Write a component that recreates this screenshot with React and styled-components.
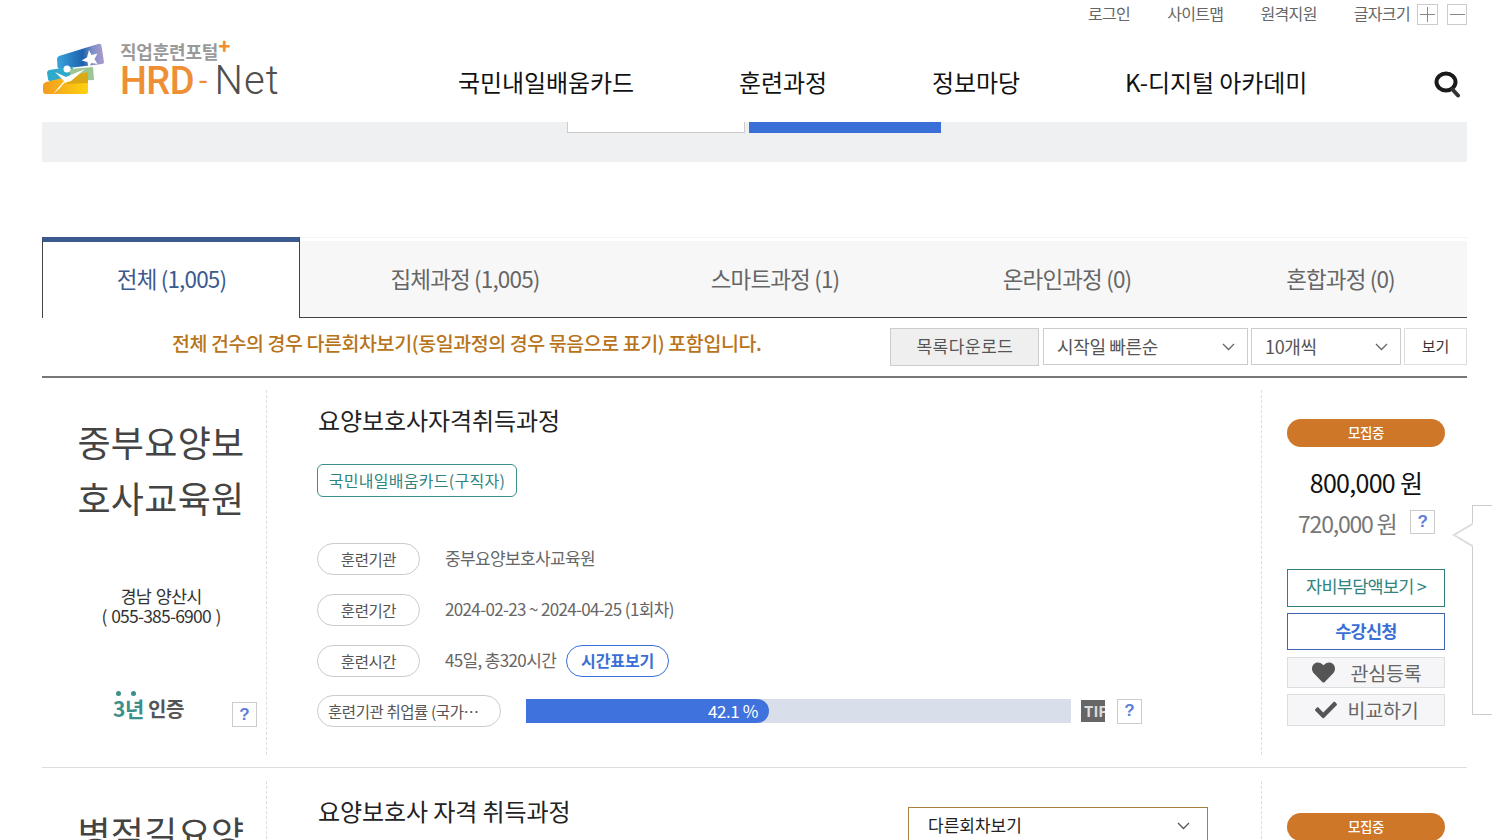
import React from "react";
import styled, { createGlobalStyle } from "styled-components";
import { FaHeart, FaCheck } from "react-icons/fa";

const GlobalStyle = createGlobalStyle`
  html, body {
    margin: 0;
    padding: 0;
    height: 840px;
    overflow: hidden;
    background: #fff;
  }
  * { box-sizing: border-box; }
  body {
    font-family: "Noto Sans CJK KR", "Noto Sans", sans-serif;
    color: #333;
  }
`;

const Page = styled.div`
  width: 1492px;
  padding: 0 25px 0 42px;
`;

const UtilBar = styled.div`
  display: flex;
  justify-content: flex-end;
  align-items: center;
  height: 28px;
  font-size: 16px;
  letter-spacing: -0.65px;
  color: #666;
`;

const UtilLink = styled.span`
  margin-right: 37px;
  padding-bottom: 2px;
  &:nth-child(4) { margin-right: 7px; }
`;

const SizeButton = styled.span`
  display: flex;
  align-items: center;
  justify-content: center;
  width: ${(p) => p.$w}px;
  height: 21px;
  margin-left: ${(p) => p.$gap}px;
  border: 1px solid #ccc;
  background: #fff;
  svg { display: block; }
`;

const Header = styled.div`
  display: flex;
  align-items: center;
  height: 94px;
  padding: 13px 7px 0 0;
`;

const Logo = styled.div`
  display: flex;
  align-self: flex-start;
  gap: 14px;
  width: 416px;
  margin-top: 1px;
`;

const LogoText = styled.div`
  display: flex;
  flex-direction: column;
`;

const LogoSmall = styled.div`
  height: 20px;
  font-size: 18px;
  line-height: 20px;
  font-weight: 700;
  letter-spacing: -0.2px;
  color: #9a9a9a;
  white-space: nowrap;
  margin-top: -1px;
  b { color: #ef8f2f; font-size: 20px; line-height: 10px; vertical-align: 5px; }
`;

const LogoBig = styled.div`
  font-family: Roboto, "Liberation Sans", sans-serif;
  font-size: 38px;
  line-height: 36px;
  margin-top: 2px;
  white-space: nowrap;
  color: #ef8f35;
  font-weight: 500;
  letter-spacing: -0.6px;
  span { margin: 0 8px 0 5px; font-size: 30px; font-weight: 400; vertical-align: 3px; }
  em { font-style: normal; font-size: 40px; font-weight: 300; color: #4f4f4f; letter-spacing: 1px; }
`;

const Nav = styled.nav`
  display: flex;
  gap: 105px;
  font-size: 24px;
  letter-spacing: -0.08px;
  color: #111;
  white-space: nowrap;
`;

const SearchIcon = styled.svg`
  display: block;
  margin: 4px 0 0 auto;
  width: 26px;
  height: 28px;
`;

const SearchStrip = styled.div`
  display: flex;
  align-items: flex-start;
  gap: 4px;
  height: 40px;
  padding-left: 525px;
  background: #eff0f2;
`;

const StripInput = styled.div`
  width: 178px;
  height: 11px;
  background: #fff;
  border: 1px solid #ccc;
  border-top: 0;
`;

const StripButton = styled.div`
  width: 192px;
  height: 11px;
  background: #3a6fd8;
`;

const Tabs = styled.div`
  display: grid;
  grid-template-columns: 258px 332px 288px 296px 251px;
  height: 81px;
  margin-top: 75px;
`;

const Tab = styled.div`
  display: flex;
  align-items: center;
  justify-content: center;
  font-size: 22.5px;
  letter-spacing: -0.85px;
  padding: 0 ${(p) => (p.$active ? "0" : "2px")} ${(p) => (p.$active ? "4px" : "2px")} ${(p) => (p.$active ? "1px" : "0")};
  color: ${(p) => (p.$active ? "#3b5a8f" : "#666")};
  background: ${(p) => (p.$active ? "#fff" : "#f7f7f7")};
  margin-top: ${(p) => (p.$active ? "0" : "4px")};
  box-shadow: ${(p) => (p.$active ? "none" : "0 -3px 0 #fff, 0 -4px 0 #f3f3f3")};
  border-top: ${(p) => (p.$active ? "5px solid #3b5a8f" : "0")};
  border-left: ${(p) => (p.$active ? "1px solid #444" : "0")};
  border-right: ${(p) => (p.$active ? "1px solid #444" : "0")};
  border-bottom: ${(p) => (p.$active ? "0" : "1px solid #444")};
`;

const FilterBar = styled.div`
  display: flex;
  align-items: flex-start;
  height: 60px;
  padding-top: 10px;
  border-bottom: 2px solid #777;
`;

const Notice = styled.div`
  width: 848px;
  padding-left: 130px;
  font-size: 19.5px;
  line-height: 30px;
  font-weight: 500;
  letter-spacing: -0.42px;
  color: #b8741a;
  white-space: nowrap;
`;

const DownloadButton = styled.div`
  display: flex;
  align-items: center;
  justify-content: center;
  width: 149px;
  height: 38px;
  margin-right: 4px;
  padding: 0 0 3px 1px;
  background: #efefef;
  border: 1px solid #ccc;
  font-size: 17px;
  letter-spacing: 0.55px;
  color: #555;
`;

const FakeSelect = styled.div`
  display: flex;
  align-items: center;
  justify-content: space-between;
  width: ${(p) => p.$w}px;
  height: 37px;
  margin-right: 3px;
  padding: 0 12px 2px 13px;
  background: #fff;
  border: 1px solid #ccc;
  font-size: 18px;
  letter-spacing: -0.35px;
  color: #555;
  svg { display: block; margin-top: 2px; }
`;

const ViewButton = styled.div`
  display: flex;
  align-items: center;
  justify-content: center;
  width: 63px;
  height: 37px;
  padding-bottom: 2px;
  border: 1px solid #ddd;
  font-size: 15px;
  color: #333;
`;

const Card = styled.article`
  display: grid;
  grid-template-columns: 225px 995px 205px;
  height: ${(p) => p.$h}px;
  padding: ${(p) => p.$pad}px 0 12px;
  border-bottom: 1px solid #ddd;
`;

const LeftCol = styled.div`
  display: flex;
  flex-direction: column;
  padding: 23px 0 0;
  border-right: 1px dashed #ddd;
`;

const InstituteName = styled.h2`
  margin: 0;
  padding: 0 13px 0 27px;
  height: 112px;
  flex: none;
  font-size: 36px;
  line-height: 56px;
  font-weight: 400;
  text-align: center;
  letter-spacing: 0.3px;
  color: #444;
`;

const Address = styled.div`
  margin-top: 61px;
  padding: 0 15px 0 29px;
  font-size: 17.5px;
  line-height: 20px;
  letter-spacing: -0.8px;
  word-spacing: 1.5px;
  text-align: center;
  color: #333;
`;

const CertRow = styled.div`
  display: flex;
  align-items: flex-start;
  justify-content: space-between;
  margin-top: 67px;
  padding: 0 9px 0 71px;
  & > span:last-child { margin-top: 9px; }
`;

const CertMark = styled.div`
  font-size: 20px;
  line-height: 30px;
  font-weight: 700;
  letter-spacing: -0.4px;
  color: #555;
`;

const CertYears = styled.span`
  position: relative;
  font-size: 21px;
  color: #3a8f8a;
  margin-right: 4px;
  &::before, &::after {
    content: "";
    position: absolute;
    top: -2px;
    width: 5px;
    height: 5px;
    border-radius: 50%;
    background: #3a8f8a;
  }
  &::before { left: 3px; }
  &::after { left: 18px; }
`;

const HelpBox = styled.span`
  display: flex;
  align-items: center;
  justify-content: center;
  width: 25px;
  height: 25px;
  flex: none;
  background: #fff;
  border: 1px solid #ccc;
  font-family: "Liberation Sans", sans-serif;
  font-size: 17px;
  font-weight: 700;
  color: #5f7fd6;
`;

const MidCol = styled.div`
  display: flex;
  flex-direction: column;
  padding: 12px 53px 0 50px;
  border-right: 1px dashed #ddd;
`;

const TitleRow = styled.div`
  display: flex;
  align-items: flex-start;
  justify-content: space-between;
`;

const Title = styled.h3`
  margin: 0 0 0 1px;
  font-size: 24px;
  line-height: 36px;
  font-weight: 400;
  letter-spacing: -0.08px;
  color: #222;
`;

const RoundSelect = styled.div`
  display: flex;
  align-items: center;
  justify-content: space-between;
  width: 300px;
  height: 38px;
  margin-top: 14px;
  padding: 0 17px 3px 19px;
  border: 1px solid #a8803c;
  font-size: 17px;
  color: #222;
  svg { display: block; margin-top: 3px; }
`;

const TrackTag = styled.div`
  align-self: flex-start;
  display: flex;
  align-items: center;
  height: 33px;
  width: 200px;
  justify-content: center;
  margin: 26px 0 46px;
  padding-bottom: 2px;
  border: 1px solid #3a8f8a;
  border-radius: 6px;
  font-size: 16px;
  letter-spacing: 0.28px;
  color: #2f8580;
`;

const InfoRow = styled.div`
  display: flex;
  align-items: center;
  height: 32px;
  margin-bottom: ${(p) => p.$mb}px;
`;

const InfoLabel = styled.span`
  display: block;
  flex: none;
  width: ${(p) => p.$w}px;
  height: 32px;
  margin-right: 25px;
  padding: 0 ${(p) => (p.$wide ? "14px 0 10px" : "0")};
  border: 1px solid #ccc;
  border-radius: 16px;
  font-size: 15.5px;
  line-height: 31px;
  letter-spacing: -0.42px;
  text-align: ${(p) => (p.$wide ? "left" : "center")};
  color: #555;
  white-space: nowrap;
  overflow: hidden;
  text-overflow: ellipsis;
`;

const InfoValue = styled.span`
  font-size: 17px;
  letter-spacing: -0.65px;
  padding-bottom: 3px;
  color: #666;
`;

const TimetableButton = styled.span`
  display: flex;
  align-items: center;
  justify-content: center;
  width: 103px;
  height: 32px;
  margin-left: 10px;
  padding-bottom: 2px;
  border: 1px solid #3a6fd8;
  border-radius: 16px;
  font-size: 16px;
  font-weight: 700;
  letter-spacing: -0.1px;
  color: #3a6fd8;
`;

const Progress = styled.div`
  width: 545px;
  height: 24px;
  background: #d8dfeb;
`;

const ProgressFill = styled.div`
  width: ${(p) => p.$w}px;
  height: 24px;
  padding-right: 11px;
  border-radius: 0 12px 12px 0;
  background: #3f72dc;
  font-size: 17px;
  line-height: 23px;
  letter-spacing: -0.4px;
  text-align: right;
  color: #fff;
`;

const TipBadge = styled.span`
  display: block;
  width: 24px;
  height: 22px;
  margin: 0 12px 0 10px;
  overflow: hidden;
  background: #666;
  font-size: 15px;
  line-height: 22px;
  font-weight: 700;
  padding-left: 3px;
  color: #ddd;
`;

const RightCol = styled.div`
  position: relative;
  display: flex;
  flex-direction: column;
  align-items: stretch;
  width: 183px;
  padding: ${(p) => p.$top}px 0 0 25px;
`;

const StatusBadge = styled.div`
  height: 28px;
  border-radius: 14px;
  background: #cf7728;
  font-size: 13.5px;
  line-height: 26px;
  font-weight: 500;
  letter-spacing: -0.5px;
  text-align: center;
  color: #fff;
`;

const Price = styled.div`
  margin-top: 17px;
  font-size: 25px;
  line-height: 36px;
  letter-spacing: -0.7px;
  text-align: center;
  color: #111;
`;

const DiscountRow = styled.div`
  display: flex;
  align-items: center;
  height: 30px;
  margin: 8px 0 31px 11px;
  font-size: 23px;
  letter-spacing: -1.2px;
  color: #777;
  & > span:last-child { width: 25px; height: 24px; margin: -2px 0 0 13px; }
`;

const OutlineButton = styled.div`
  display: flex;
  align-items: center;
  justify-content: center;
  height: ${(p) => p.$h}px;
  margin-bottom: ${(p) => p.$mb}px;
  padding-bottom: ${(p) => p.$pb}px;
  border: ${(p) => p.$bw}px solid ${(p) => p.$color};
  font-size: 17.5px;
  font-weight: ${(p) => p.$weight};
  letter-spacing: -0.72px;
  color: ${(p) => p.$text};
`;

const GrayButton = styled.div`
  display: flex;
  align-items: center;
  justify-content: center;
  gap: ${(p) => p.$gap}px;
  height: ${(p) => p.$h}px;
  margin-bottom: 6px;
  padding: 0 0 1px 1px;
  background: #f6f6f8;
  border: 1px solid #ddd;
  font-size: 19.5px;
  letter-spacing: -0.2px;
  color: #666;
  svg { display: block; color: #555; }
`;

const TooltipBox = styled.div`
  position: absolute;
  left: 210px;
  top: 115px;
  width: 300px;
  height: 210px;
  background: #fff;
  border: 1px solid #ccc;
`;

const TooltipArrow = styled.svg`
  position: absolute;
  left: -21px;
  top: 16px;
  width: 21px;
  height: 26px;
`;

const Chevron = ({ color = "#666", w = 13 }) => (
  <svg width={w} height="8" viewBox="0 0 13 8" fill="none">
    <path d="M1 1l5.500 5.500L12 1" stroke={color} strokeWidth="1.300" />
  </svg>
);

const Course = ({ course }) => (
  <Card $h={course.h} $pad={course.pad}>
    <LeftCol>
      <InstituteName>{course.institute}</InstituteName>
      {course.address && (
        <>
          <Address>
            {course.address}
            <br />( {course.phone} )
          </Address>
          <CertRow>
            <CertMark>
              <CertYears>3년</CertYears>인증
            </CertMark>
            <HelpBox>?</HelpBox>
          </CertRow>
        </>
      )}
    </LeftCol>
    <MidCol>
      <TitleRow>
        <Title>{course.title}</Title>
        {course.rounds && (
          <RoundSelect>
            다른회차보기
            <Chevron color="#555" />
          </RoundSelect>
        )}
      </TitleRow>
      {course.address && (
        <>
          <TrackTag>국민내일배움카드(구직자)</TrackTag>
          <InfoRow $mb={19}>
            <InfoLabel $w={103}>훈련기관</InfoLabel>
            <InfoValue>중부요양보호사교육원</InfoValue>
          </InfoRow>
          <InfoRow $mb={19}>
            <InfoLabel $w={103}>훈련기간</InfoLabel>
            <InfoValue>2024-02-23 ~ 2024-04-25 (1회차)</InfoValue>
          </InfoRow>
          <InfoRow $mb={18}>
            <InfoLabel $w={103}>훈련시간</InfoLabel>
            <InfoValue>45일, 총320시간</InfoValue>
            <TimetableButton>시간표보기</TimetableButton>
          </InfoRow>
          <InfoRow>
            <InfoLabel $w={184} $wide>
              훈련기관 취업률 (국가기술자격)
            </InfoLabel>
            <Progress>
              <ProgressFill $w={243}>42.1 %</ProgressFill>
            </Progress>
            <TipBadge>TIP</TipBadge>
            <HelpBox>?</HelpBox>
          </InfoRow>
        </>
      )}
    </MidCol>
    <RightCol $top={course.badgeTop}>
      <StatusBadge>모집중</StatusBadge>
      {course.address && (
        <>
          <Price>800,000 원</Price>
          <DiscountRow>
            <span>720,000 원</span>
            <HelpBox>?</HelpBox>
          </DiscountRow>
          <OutlineButton $h={38} $mb={6} $bw={1} $pb={5} $color="#2f7f7a" $text="#2f8580" $weight={400}>
            자비부담액보기 &gt;
          </OutlineButton>
          <OutlineButton $h={37} $mb={7} $bw={1} $pb={2} $color="#3f64b0" $text="#3a6fd8" $weight={700}>
            수강신청
          </OutlineButton>
          <GrayButton $h={31} $gap={16}>
            <FaHeart size={23} />
            관심등록
          </GrayButton>
          <GrayButton $h={32} $gap={11}>
            <FaCheck size={22} />
            비교하기
          </GrayButton>
          <TooltipBox>
            <TooltipArrow viewBox="0 0 21 26">
              <path d="M21 1.500L2 13l19 11.500" fill="#fff" stroke="#ddd" strokeWidth="2" />
            </TooltipArrow>
          </TooltipBox>
        </>
      )}
    </RightCol>
  </Card>
);

const courses = [
  {
    h: 390,
    pad: 12,
    badgeTop: 29,
    institute: "중부요양보호사교육원",
    address: "경남 양산시",
    phone: "055-385-6900",
    title: "요양보호사자격취득과정",
  },
  {
    h: 390,
    pad: 13,
    badgeTop: 32,
    institute: "병점길요양보호사교육원",
    title: "요양보호사 자격 취득과정",
    rounds: true,
  },
];

const App = () => (
  <Page>
    <GlobalStyle />
    <UtilBar>
      <UtilLink>로그인</UtilLink>
      <UtilLink>사이트맵</UtilLink>
      <UtilLink>원격지원</UtilLink>
      <UtilLink>글자크기</UtilLink>
      <SizeButton $w={21} $gap={0}>
        <svg width="15" height="15" viewBox="0 0 15 15">
          <path d="M7.500 0v15M0 7.500h15" stroke="#888" strokeWidth="1" />
        </svg>
      </SizeButton>
      <SizeButton $w={20} $gap={9}>
        <svg width="15" height="15" viewBox="0 0 15 15">
          <path d="M0 7.500h15" stroke="#888" strokeWidth="1" />
        </svg>
      </SizeButton>
    </UtilBar>
    <Header>
      <Logo>
        <svg width="64" height="56" viewBox="0 0 64 56">
          <defs>
            <linearGradient id="bandTop" x1="0" x2="1" y1="0.500" y2="0.500">
              <stop offset="0" stopColor="#3aa3dc" />
              <stop offset="0.550" stopColor="#1c62ad" />
              <stop offset="0.750" stopColor="#7f8fc8" />
              <stop offset="1" stopColor="#ab9ccf" />
            </linearGradient>
            <linearGradient id="bandLow" x1="0" x2="1" y1="0" y2="0">
              <stop offset="0" stopColor="#f49c1e" />
              <stop offset="1" stopColor="#fdd20f" />
            </linearGradient>
          </defs>
          <path d="M15 17q0-2 2-3L56 2q3-1 3.500 2L62 20q0 2-2 2L18 27q-2 0-2.500-2z" fill="url(#bandTop)" />
          <path d="M5 31q0-2 2-3l20-3 4 1 0 9-22 4q-3 0-3-2z" fill="#2fa9cc" />
          <path d="M28 27l23-2 1 13-24 1z" fill="#9cc795" />
          <path d="M1 44q0-3 3-4l42-10v20q0 2-2 2H4q-3 0-3-3z" fill="url(#bandLow)" />
          <path d="M25 35l21-5v11l-21 1z" fill="#dba916" />
          <path d="M11 52l11-13-9-9 11 5 19-8-14 12-7 2-4 5z" fill="#fff" />
          <circle cx="25" cy="27" r="3.500" fill="#fff" />
          <path d="M47 8l2.500 5 6-1.500-3 5.500 3 5-6-1-3 4.500-1-5.500-6-1.500 5.500-3z" fill="#fff" />
        </svg>
        <LogoText>
          <LogoSmall>
            직업훈련포털<b>+</b>
          </LogoSmall>
          <LogoBig>
            HRD<span>-</span>
            <em>Net</em>
          </LogoBig>
        </LogoText>
      </Logo>
      <Nav>
        <span>국민내일배움카드</span>
        <span>훈련과정</span>
        <span>정보마당</span>
        <span>K-디지털 아카데미</span>
      </Nav>
      <SearchIcon viewBox="0 0 26 28">
        <ellipse cx="12" cy="12" rx="9.500" ry="8.500" fill="none" stroke="#1a1a1a" strokeWidth="4" />
        <path d="M18.500 19.500l5.500 6" stroke="#333" strokeWidth="4" strokeLinecap="round" />
      </SearchIcon>
    </Header>
    <SearchStrip>
      <StripInput />
      <StripButton />
    </SearchStrip>
    <Tabs>
      <Tab $active>전체 (1,005)</Tab>
      <Tab>집체과정 (1,005)</Tab>
      <Tab>스마트과정 (1)</Tab>
      <Tab>온라인과정 (0)</Tab>
      <Tab>혼합과정 (0)</Tab>
    </Tabs>
    <FilterBar>
      <Notice>전체 건수의 경우 다른회차보기(동일과정의 경우 묶음으로 표기) 포함입니다.</Notice>
      <DownloadButton>목록다운로드</DownloadButton>
      <FakeSelect $w={205}>
        시작일 빠른순
        <Chevron />
      </FakeSelect>
      <FakeSelect $w={150}>
        10개씩
        <Chevron />
      </FakeSelect>
      <ViewButton>보기</ViewButton>
    </FilterBar>
    {courses.map((course) => (
      <Course key={course.title} course={course} />
    ))}
  </Page>
);

export default App;
